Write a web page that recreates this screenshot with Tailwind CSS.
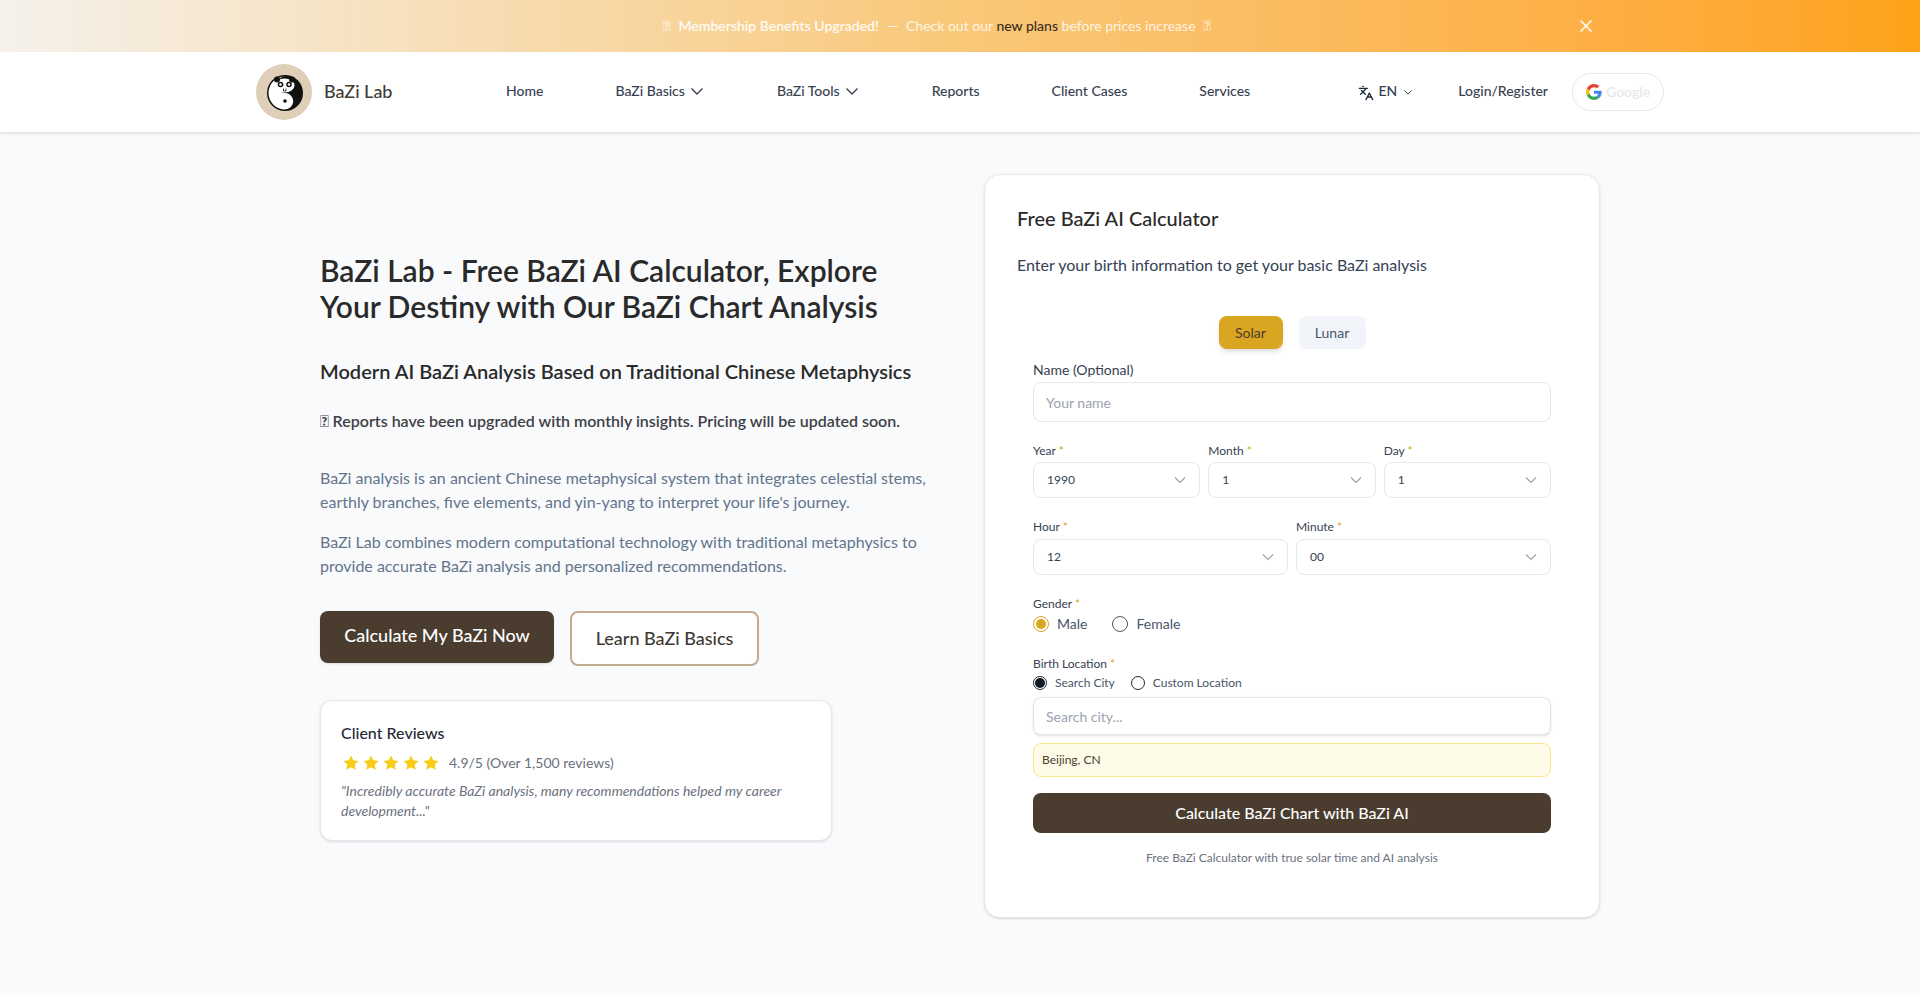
<!DOCTYPE html>
<html lang="en">
  <head>
    <meta charset="UTF-8" />
    <meta name="viewport" content="width=device-width, initial-scale=1.0" />
    <title>BaZi Lab</title>
    <script src="https://cdn.jsdelivr.net/npm/@tailwindcss/browser@4"></script>
  </head>
  <body class="bg-[#f8fafc] font-['Lato','Noto_Sans',sans-serif] text-[#1f2937]">
    <!-- promo banner -->
    <div class="relative flex h-[52px] items-center justify-center bg-gradient-to-r from-[#f5f1ea] via-[#f9c878] to-[#ffa216] pr-[46px] text-sm text-white/80">
      <span>&#xE000;</span>
      <span class="ml-2 font-semibold text-white/90">Membership Benefits Upgraded!</span>
      <span class="mx-2">—</span>
      <span>Check out our <span class="font-medium text-[#3d2f1f]">new plans</span> before prices increase</span>
      <span class="ml-2">&#xE000;</span>
      <svg class="absolute left-[1579px] top-[19px] h-[14px] w-[14px]" viewBox="0 0 14 14" fill="none" stroke="white" stroke-width="1.5"><path d="M1.5 1.5l11 11M12.5 1.5l-11 11" /></svg>
    </div>

    <!-- nav -->
    <header class="h-[80px] bg-white shadow-[0_1px_3px_rgba(0,0,0,0.15)]">
      <div class="mx-auto flex h-full w-[1408px] items-center">
        <div class="flex w-[250px] items-center gap-3">
          <svg class="h-[56px] w-[56px]" viewBox="0 0 56 56">
            <circle cx="28" cy="28" r="28" fill="#dfcfb9" />
            <circle cx="29" cy="29" r="18" fill="#111" />
            <path d="M29 12.500a16.500 16.500 0 0 0 0 33a8.250 8.250 0 0 0 0-16.500a8.250 8.250 0 0 1 0-16.500z" fill="#fff" />
            <ellipse cx="28.500" cy="21.500" rx="10" ry="7" fill="#fff" />
            <circle cx="21" cy="15.500" r="3" fill="#111" />
            <circle cx="36" cy="15.500" r="3" fill="#111" />
            <circle cx="24.500" cy="20.500" r="2.800" fill="#111" />
            <circle cx="33" cy="20.500" r="2.800" fill="#111" />
            <circle cx="24.500" cy="20.500" r="1.300" fill="#fff" />
            <circle cx="33" cy="20.500" r="1.300" fill="#fff" />
            <path d="M27.500 24.500v2.500h2.500v-2.500" fill="none" stroke="#111" stroke-width="0.800" />
            <circle cx="29" cy="37" r="4" fill="#fff" />
            <circle cx="29" cy="37" r="1.800" fill="#111" />
          </svg>
          <span class="pb-0.5 text-lg font-medium text-[#3f3a34]">BaZi Lab</span>
        </div>
        <nav class="flex items-center gap-[72px] pb-0.5 text-sm font-medium text-[#374151]">
          <a>Home</a>
          <a class="flex items-center gap-1.5">BaZi Basics
            <svg class="mr-0.5 h-3 w-3" viewBox="0 0 12 12" fill="none" stroke="currentColor" stroke-width="1.4"><path d="M.5 3.500l5.500 5.500 5.500-5.500" /></svg>
          </a>
          <a class="flex items-center gap-1.5">BaZi Tools
            <svg class="mr-0.5 h-3 w-3" viewBox="0 0 12 12" fill="none" stroke="currentColor" stroke-width="1.4"><path d="M.5 3.500l5.500 5.500 5.500-5.500" /></svg>
          </a>
          <a>Reports</a>
          <a>Client Cases</a>
          <a>Services</a>
        </nav>
        <div class="ml-auto flex items-center text-sm font-medium text-[#374151]">
          <svg class="mt-0.5 h-4 w-4" viewBox="0 0 24 24" fill="none" stroke="#1f2937" stroke-width="2" stroke-linecap="round" stroke-linejoin="round"><path d="M5 8l6 6M4 14l6-6 2-3M2 5h12M7 2h1M22 22l-5-10-5 10M14 18h6" /></svg>
          <span class="ml-1 pb-0.5">EN</span>
          <svg class="ml-1.5 h-2.5 w-2.5" viewBox="0 0 12 12" fill="none" stroke="currentColor" stroke-width="1.2"><path d="M1.500 4l4.500 4.500L10.500 4" /></svg>
          <a class="ml-[45px] pb-0.5">Login/Register</a>
          <div class="ml-6 flex h-[38px] w-[92px] items-center gap-1 rounded-full border border-[#e5e7eb] pl-[13px]">
            <svg class="h-4 w-4" viewBox="0 0 48 48">
              <path fill="#EA4335" d="M24 9.500c3.500 0 6.700 1.200 9.200 3.600l6.900-6.900C35.900 2.400 30.400 0 24 0 14.600 0 6.500 5.400 2.600 13.200l8 6.200C12.500 13.600 17.800 9.500 24 9.500z" />
              <path fill="#4285F4" d="M47 24.500c0-1.600-.1-3.100-.4-4.500H24v9h12.900c-.6 3-2.200 5.500-4.700 7.200l7.700 6c4.500-4.200 7.100-10.300 7.100-17.700z" />
              <path fill="#FBBC05" d="M10.600 28.600c-.5-1.400-.8-3-.8-4.600s.3-3.200.8-4.600l-8-6.200C.9 16.500 0 20.100 0 24s.9 7.500 2.600 10.800l8-6.200z" />
              <path fill="#34A853" d="M24 48c6.500 0 11.900-2.100 15.900-5.800l-7.700-6c-2.200 1.500-4.900 2.300-8.200 2.300-6.200 0-11.500-4.100-13.400-9.900l-8 6.200C6.500 42.600 14.600 48 24 48z" />
            </svg>
            <span class="text-[#e5e7eb]">Google</span>
          </div>
        </div>
      </div>
    </header>

    <!-- hero -->
    <main class="mx-auto grid w-[1280px] grid-cols-2 items-center gap-12 pt-[42px] pb-[75px]">
      <section>
        <h1 class="text-[30px] leading-[36px] font-semibold text-[#2a2a2a]">BaZi Lab - Free BaZi AI Calculator, Explore Your Destiny with Our BaZi Chart Analysis</h1>
        <h2 class="mt-[33px] text-xl font-semibold text-[#2a2a2a]">Modern AI BaZi Analysis Based on Traditional Chinese Metaphysics</h2>
        <p class="mt-6 font-semibold text-[#3f3f46]">&#xE000; Reports have been upgraded with monthly insights. Pricing will be updated soon.</p>
        <p class="mt-[33px] leading-6 text-[#64748b]">BaZi analysis is an ancient Chinese metaphysical system that integrates celestial stems, earthly branches, five elements, and yin-yang to interpret your life's journey.</p>
        <p class="mt-4 leading-6 text-[#64748b]">BaZi Lab combines modern computational technology with traditional metaphysics to provide accurate BaZi analysis and personalized recommendations.</p>
        <div class="mt-[33px] flex items-start gap-4">
          <button class="h-[52px] w-[234px] rounded-lg bg-[#4a3c2f] pb-1 text-lg font-medium text-white shadow-sm">Calculate My BaZi Now</button>
          <button class="h-[55px] w-[189px] rounded-lg border-2 border-[#c4aa8f] bg-white text-lg font-medium text-[#3f3a34]">Learn BaZi Basics</button>
        </div>
        <div class="mt-[34px] h-[141px] w-[512px] rounded-xl border border-[#e5e7eb] bg-white p-5 shadow-sm">
          <h3 class="font-medium text-[#1f2937]">Client Reviews</h3>
          <div class="mt-2 flex items-center">
            <svg class="h-5 w-5 text-[#facc15]" viewBox="0 0 20 20" fill="currentColor"><path d="M10 2.500l2.300 4.800 5.200.7-3.800 3.600 1 5.200-4.700-2.500-4.700 2.500 1-5.200L2.500 8l5.200-.7z" /></svg>
            <svg class="h-5 w-5 text-[#facc15]" viewBox="0 0 20 20" fill="currentColor"><path d="M10 2.500l2.300 4.800 5.200.7-3.800 3.600 1 5.200-4.700-2.500-4.700 2.500 1-5.200L2.500 8l5.200-.7z" /></svg>
            <svg class="h-5 w-5 text-[#facc15]" viewBox="0 0 20 20" fill="currentColor"><path d="M10 2.500l2.300 4.800 5.200.7-3.800 3.600 1 5.200-4.700-2.500-4.700 2.500 1-5.200L2.500 8l5.200-.7z" /></svg>
            <svg class="h-5 w-5 text-[#facc15]" viewBox="0 0 20 20" fill="currentColor"><path d="M10 2.500l2.300 4.800 5.200.7-3.800 3.600 1 5.200-4.700-2.500-4.700 2.500 1-5.200L2.500 8l5.200-.7z" /></svg>
            <svg class="h-5 w-5 text-[#facc15]" viewBox="0 0 20 20" fill="currentColor"><path d="M10 2.500l2.300 4.800 5.200.7-3.800 3.600 1 5.200-4.700-2.500-4.700 2.500 1-5.200L2.500 8l5.200-.7z" /></svg>
            <span class="ml-2 text-sm text-[#6b7280]">4.9/5 (Over 1,500 reviews)</span>
          </div>
          <p class="mt-2 text-sm leading-5 text-[#6b7280] italic">"Incredibly accurate BaZi analysis, many recommendations helped my career development..."</p>
        </div>
      </section>

      <!-- calculator card -->
      <section class="h-[744px] rounded-2xl border border-[#e5e7eb] bg-white px-8 pt-[29px] pb-8 shadow-sm">
        <h2 class="text-xl font-medium leading-7 text-[#2a2a2a]">Free BaZi AI Calculator</h2>
        <p class="mt-[21px] leading-6 text-[#334155]">Enter your birth information to get your basic BaZi analysis</p>
        <form class="mt-[39px] px-4">
          <div class="flex justify-center gap-4 text-sm">
            <button type="button" class="h-[33px] w-[64px] rounded-lg bg-[#daa520] text-[#4a3c2f] shadow-md">Solar</button>
            <button type="button" class="h-[33px] w-[67px] rounded-lg bg-[#f1f5f9] text-[#475569]">Lunar</button>
          </div>
          <label class="mt-[11px] block text-sm leading-5 text-[#374151]">Name (Optional)</label>
          <input class="mt-0.5 block h-[40px] w-full rounded-lg border border-[#e5e7eb] bg-white px-3 text-sm placeholder:text-[#9ca3af]" placeholder="Your name" />

          <div class="mt-[21px] grid grid-cols-3 gap-2">
            <div>
              <label class="block text-xs leading-4 text-[#374151]">Year <span class="text-[#daa520]">*</span></label>
              <div class="mt-[3px] flex h-[36px] items-center justify-between rounded-lg border border-[#e5e7eb] px-[13px] text-xs text-[#374151]">1990
                <svg class="h-3 w-3 text-[#9ca3af]" viewBox="0 0 12 12" fill="none" stroke="currentColor" stroke-width="1.2"><path d="M1 3.500l5 5 5-5" /></svg>
              </div>
            </div>
            <div>
              <label class="block text-xs leading-4 text-[#374151]">Month <span class="text-[#daa520]">*</span></label>
              <div class="mt-[3px] flex h-[36px] items-center justify-between rounded-lg border border-[#e5e7eb] px-[13px] text-xs text-[#374151]">1
                <svg class="h-3 w-3 text-[#9ca3af]" viewBox="0 0 12 12" fill="none" stroke="currentColor" stroke-width="1.2"><path d="M1 3.500l5 5 5-5" /></svg>
              </div>
            </div>
            <div>
              <label class="block text-xs leading-4 text-[#374151]">Day <span class="text-[#daa520]">*</span></label>
              <div class="mt-[3px] flex h-[36px] items-center justify-between rounded-lg border border-[#e5e7eb] px-[13px] text-xs text-[#374151]">1
                <svg class="h-3 w-3 text-[#9ca3af]" viewBox="0 0 12 12" fill="none" stroke="currentColor" stroke-width="1.2"><path d="M1 3.500l5 5 5-5" /></svg>
              </div>
            </div>
          </div>

          <div class="mt-[21px] grid grid-cols-2 gap-2">
            <div>
              <label class="block text-xs leading-4 text-[#374151]">Hour <span class="text-[#daa520]">*</span></label>
              <div class="mt-1 flex h-[36px] items-center justify-between rounded-lg border border-[#e5e7eb] px-[13px] text-xs text-[#374151]">12
                <svg class="h-3 w-3 text-[#9ca3af]" viewBox="0 0 12 12" fill="none" stroke="currentColor" stroke-width="1.2"><path d="M1 3.500l5 5 5-5" /></svg>
              </div>
            </div>
            <div>
              <label class="block text-xs leading-4 text-[#374151]">Minute <span class="text-[#daa520]">*</span></label>
              <div class="mt-1 flex h-[36px] items-center justify-between rounded-lg border border-[#e5e7eb] px-[13px] text-xs text-[#374151]">00
                <svg class="h-3 w-3 text-[#9ca3af]" viewBox="0 0 12 12" fill="none" stroke="currentColor" stroke-width="1.2"><path d="M1 3.500l5 5 5-5" /></svg>
              </div>
            </div>
          </div>

          <label class="mt-[21px] block text-xs leading-4 text-[#374151]">Gender <span class="text-[#daa520]">*</span></label>
          <div class="mt-0.5 flex items-center text-sm text-[#475569]">
            <span class="flex h-4 w-4 items-center justify-center rounded-full border border-[#daa520]"><span class="h-[10px] w-[10px] rounded-full bg-[#daa520]"></span></span>
            <span class="ml-2">Male</span>
            <span class="ml-[25px] h-4 w-4 rounded-full border border-[#475569]"></span>
            <span class="ml-2">Female</span>
          </div>

          <label class="mt-[22px] block text-xs leading-4 text-[#374151]">Birth Location <span class="text-[#daa520]">*</span></label>
          <div class="mt-[3px] flex items-center text-xs text-[#475569]">
            <span class="flex h-[14px] w-[14px] items-center justify-center rounded-full border border-[#1f2937]"><span class="h-[10px] w-[10px] rounded-full bg-[#111827]"></span></span>
            <span class="ml-2">Search City</span>
            <span class="ml-4 h-[14px] w-[14px] rounded-full border border-[#1f2937]"></span>
            <span class="ml-2">Custom Location</span>
          </div>
          <input class="mt-[6px] block h-[38px] w-full rounded-lg border border-[#e5e7eb] bg-white px-3 text-sm shadow-sm placeholder:text-[#9ca3af]" placeholder="Search city..." />
          <div class="mt-2 flex h-[34px] items-center rounded-lg border border-[#fde68a] bg-[#fefce8] px-2 text-xs text-[#4a3c2f]">Beijing, CN</div>
          <button type="button" class="mt-4 h-[40px] w-full rounded-lg bg-[#4a3c2f] font-medium text-white">Calculate BaZi Chart with BaZi AI</button>
          <p class="mt-[17px] text-center text-xs text-[#6b7280]">Free BaZi Calculator with true solar time and AI analysis</p>
        </form>
      </section>
    </main>
  </body>
</html>
